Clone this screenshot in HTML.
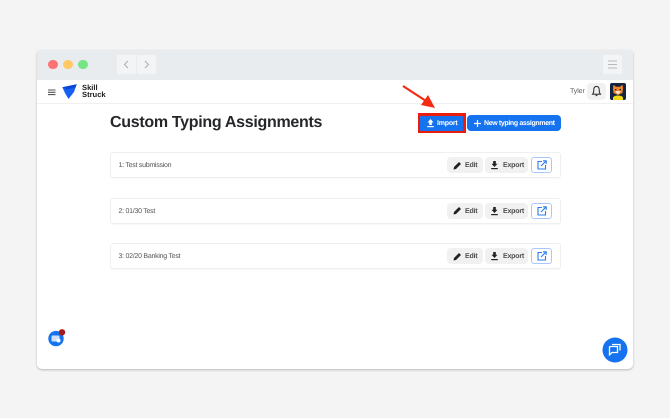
<!DOCTYPE html>
<html><head><meta charset="utf-8">
<style>
*{box-sizing:border-box}
html,body{margin:0;padding:0;width:670px;height:418px;overflow:hidden;background:#f4f4f4;font-family:"Liberation Sans",sans-serif;color:#26272b;text-rendering:geometricPrecision}
.abs{position:absolute}
#win{position:absolute;left:37px;top:50px;width:596px;height:319px;background:#fff;border-radius:4px 4px 5px 5px;box-shadow:0 1px 2px rgba(0,0,0,.25);overflow:hidden}
#bar{position:absolute;left:0;top:0;width:596px;height:30px;background:#e8ecee}
.dot{position:absolute;top:10px;width:9.4px;height:9.4px;border-radius:50%}
.nav{position:absolute;top:5px;width:18.5px;height:19px;background:#f2f4f5}
#hdr{position:absolute;left:0;top:53px;width:596px;height:1px;background:#f0f0f0}
.row{position:absolute;left:110px;width:451px;height:26px;background:#fff;border:1px solid #efefef;border-radius:3px;box-shadow:0 1px 1px rgba(0,0,0,.03)}
.row .t{position:absolute;left:7.500px;top:7.300px;font-size:7px;letter-spacing:-.26px;line-height:12px;color:#555;white-space:nowrap}
.b{position:absolute;top:4px;height:16px;background:#f1f1f1;border-radius:4px;font-size:7px;letter-spacing:-.2px;font-weight:bold;line-height:16px;color:#4c4c4c}
.b span{position:absolute;top:1px}
.b svg{position:absolute}
.o{position:absolute;left:420px;top:4px;width:21px;height:16px;border:1px solid #a9c8fb;border-radius:3px;background:#fff}
.o svg{position:absolute;left:4.500px;top:2px}
.blue{position:absolute;background:#1573f0;color:#fff;font-weight:bold;font-size:7px;line-height:16px;height:16px}
</style></head><body>
<div id="win">
<div id="bar">
<div class="dot" style="left:11.300px;background:#ff7273"></div>
<div class="dot" style="left:26.300px;background:#ffc966"></div>
<div class="dot" style="left:41.300px;background:#76e585"></div>
<div class="nav" style="left:80px"><svg width="19" height="19"><path d="M11 6L7.500 9.500L11 13" fill="none" stroke="#a9adb0" stroke-width="1"/></svg></div>
<div class="nav" style="left:100px"><svg width="19" height="19"><path d="M8 6L11.500 9.500L8 13" fill="none" stroke="#a9adb0" stroke-width="1"/></svg></div>
<div class="nav" style="left:566px"><svg width="19" height="19"><path d="M5 6H14M5 9.500H14M5 13H14" stroke="#b5b9bb" stroke-width="1"/></svg></div>
</div>
<div id="hdr"></div>
</div>

<svg class="abs" style="left:47px;top:89px" width="10" height="7"><path d="M1 1H8.500M1 3.300H8.500M1 5.600H8.500" stroke="#555" stroke-width="1.100"/></svg>
<svg class="abs" style="left:61px;top:84px" width="17" height="16"><path d="M1.300 3.300L15.700 .2L13 8L7.500 15L4 9Z" fill="#1560f2"/><path d="M1.300 3.300L15.700 .2L14.500 3.500L6 5.500Z" fill="#0c46d8"/></svg>
<div class="abs" style="left:82px;top:85px;font-size:7.600px;line-height:6.800px;font-weight:bold;color:#1d1d1f">Skill<br>Struck</div>

<div class="abs" style="left:570px;top:86.300px;font-size:7px;letter-spacing:-.1px;line-height:12px;color:#5b5b5b">Tyler</div>
<div class="abs" style="left:587px;top:83px;width:19px;height:17px;background:#f1f1f1;border-radius:4px"><svg width="19" height="17"><path d="M9.500 3.400C7.500 3.400 6.800 5 6.800 6.600C6.800 9 6.200 10.400 5.600 11.200H13.400C12.800 10.400 12.200 9 12.200 6.600C12.200 5 11.500 3.400 9.500 3.400Z" fill="none" stroke="#333" stroke-width="1.100"/><path d="M8.600 12.500H10.400" stroke="#333" stroke-width="1.200"/></svg></div>
<svg class="abs" style="left:610px;top:83px" width="16" height="17"><rect width="16" height="17" rx="2" fill="#14233f"/><path d="M3 5L3.500 1.800L6 3.800H10L12.500 1.800L13 5L12.500 10L8 12L3.500 10Z" fill="#f0862c"/><path d="M5 8.500L8 11.500L11 8.500L9.500 8H6.500Z" fill="#fbe3c5"/><rect x="5" y="6" width="1.400" height="1.400" fill="#222"/><rect x="9.600" y="6" width="1.400" height="1.400" fill="#222"/><path d="M3 17V14.500Q4 12.500 8 12.500T13 14.500V17Z" fill="#f1d913"/></svg>

<div class="abs" style="left:110px;top:112px;font-size:16px;letter-spacing:-.3px;line-height:21px;font-weight:bold;color:#26272b;white-space:nowrap">Custom Typing Assignments</div>

<div class="abs" style="left:418px;top:113.400px;width:47.500px;height:19.400px;background:#ea1c0e"></div>
<div class="blue" style="left:420.400px;top:115.600px;width:42.500px;height:15px;border-radius:1px"><svg class="abs" style="left:5.600px;top:2.500px" width="9" height="10"><path d="M4.500 1L7.500 4.500H5.800V7H3.200V4.500H1.500Z" fill="#fff"/><rect x="1.200" y="8" width="6.600" height="1.200" fill="#fff"/></svg><span style="position:absolute;left:16.600px;top:.5px;letter-spacing:-.2px">Import</span></div>
<div class="blue" style="left:467px;top:115px;width:94px;border-radius:4px"><svg class="abs" style="left:5.500px;top:4px" width="9" height="9"><path d="M4.500 1V8M1 4.500H8" stroke="#fff" stroke-width="1.200"/></svg><span style="position:absolute;left:17px;top:1px;white-space:nowrap;letter-spacing:-.36px">New typing assignment</span></div>

<svg class="abs" style="left:400px;top:83px" width="38" height="28"><path d="M3 3L26 18" stroke="#f52a14" stroke-width="2.200"/><path d="M21 22L28 12L35 25Z" fill="#f52a14"/></svg>

<div class="row" style="top:152px"><div class="t">1: Test submission</div>
<div class="b" style="left:336px;width:35.500px"><svg style="left:6px;top:3.500px" width="9" height="9"><path d="M.5 8.500L1 6L6 1L8 3L3 8Z" fill="#222"/></svg><span style="left:18px">Edit</span></div>
<div class="b" style="left:374px;width:43px"><svg style="left:5px;top:3px" width="9" height="10"><path d="M4.500 7L1.500 3.800H3.200V1H5.800V3.800H7.500Z" fill="#222"/><rect x="1.200" y="8" width="6.600" height="1.200" fill="#222"/></svg><span style="left:18px">Export</span></div>
<div class="o"><svg width="10" height="10"><path d="M5 1.500H1V9H8.500V5" fill="none" stroke="#2a7cf0" stroke-width="1.100"/><path d="M4 6L9 1M6 .8H9.200V4" fill="none" stroke="#2a7cf0" stroke-width="1.100"/></svg></div></div>

<div class="row" style="top:197.500px"><div class="t">2: 01/30 Test</div>
<div class="b" style="left:336px;width:35.500px"><svg style="left:6px;top:3.500px" width="9" height="9"><path d="M.5 8.500L1 6L6 1L8 3L3 8Z" fill="#222"/></svg><span style="left:18px">Edit</span></div>
<div class="b" style="left:374px;width:43px"><svg style="left:5px;top:3px" width="9" height="10"><path d="M4.500 7L1.500 3.800H3.200V1H5.800V3.800H7.500Z" fill="#222"/><rect x="1.200" y="8" width="6.600" height="1.200" fill="#222"/></svg><span style="left:18px">Export</span></div>
<div class="o"><svg width="10" height="10"><path d="M5 1.500H1V9H8.500V5" fill="none" stroke="#2a7cf0" stroke-width="1.100"/><path d="M4 6L9 1M6 .8H9.200V4" fill="none" stroke="#2a7cf0" stroke-width="1.100"/></svg></div></div>

<div class="row" style="top:243px"><div class="t">3: 02/20 Banking Test</div>
<div class="b" style="left:336px;width:35.500px"><svg style="left:6px;top:3.500px" width="9" height="9"><path d="M.5 8.500L1 6L6 1L8 3L3 8Z" fill="#222"/></svg><span style="left:18px">Edit</span></div>
<div class="b" style="left:374px;width:43px"><svg style="left:5px;top:3px" width="9" height="10"><path d="M4.500 7L1.500 3.800H3.200V1H5.800V3.800H7.500Z" fill="#222"/><rect x="1.200" y="8" width="6.600" height="1.200" fill="#222"/></svg><span style="left:18px">Export</span></div>
<div class="o"><svg width="10" height="10"><path d="M5 1.500H1V9H8.500V5" fill="none" stroke="#2a7cf0" stroke-width="1.100"/><path d="M4 6L9 1M6 .8H9.200V4" fill="none" stroke="#2a7cf0" stroke-width="1.100"/></svg></div></div>

<svg class="abs" style="left:48px;top:328px" width="20" height="19"><circle cx="8" cy="10.600" r="7.700" fill="#1573f0"/><rect x="3.500" y="7.500" width="8" height="6" rx="1" fill="#cfe0fb"/><circle cx="10.500" cy="12.500" r="2" fill="#fff"/><circle cx="14" cy="4.300" r="3.200" fill="#a41d1d"/></svg>

<svg class="abs" style="left:602px;top:337px" width="26" height="26"><circle cx="13" cy="13" r="12.500" fill="#1573f0"/><path d="M8 9.500H15.500V15.500H10L7.500 17.800V10Z" fill="none" stroke="#fff" stroke-width="1.300"/><path d="M10 7.500H18V13.500" fill="none" stroke="#fff" stroke-width="1.300"/></svg>
</body></html>
